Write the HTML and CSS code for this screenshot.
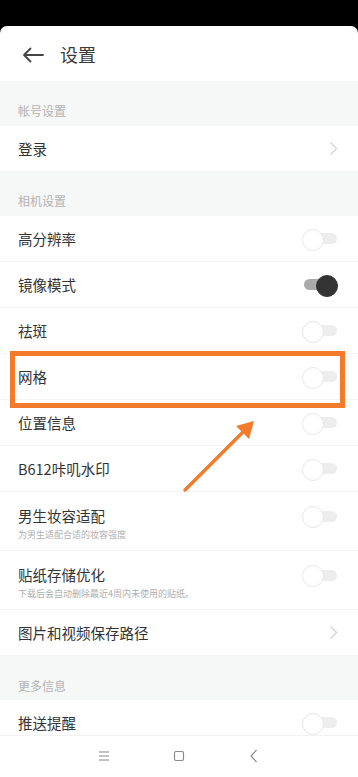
FILE: index.html
```html
<!DOCTYPE html>
<html lang="zh">
<head>
<meta charset="utf-8">
<title>设置</title>
<link rel="stylesheet" href="styles.css">
</head>
<body>
<div class="phone">
  <div class="statusbar"></div>
  <div class="app">
    <header class="topbar">
      <svg class="back" width="22" height="16" viewBox="0 0 22 16"><path d="M21 8H2M8.5 1.5L2 8l6.5 6.5" fill="none" stroke="#444" stroke-width="1.8" stroke-linecap="round" stroke-linejoin="round"/></svg>
      <h1 class="title">设置</h1>
    </header>
    <main class="list">
      <div class="section">帐号设置</div>
      <div class="row"><span class="label">登录</span><svg class="chev" width="9" height="15" viewBox="0 0 9 15"><path d="M1.5 1.5L7.5 7.5L1.5 13.5" fill="none" stroke="#d4d4d4" stroke-width="1.3"/></svg></div>
      <div class="section s2">相机设置</div>
      <div class="row"><span class="label">高分辨率</span><span class="toggle"></span></div>
      <div class="row"><span class="label">镜像模式</span><span class="toggle on"></span></div>
      <div class="row"><span class="label">祛斑</span><span class="toggle"></span></div>
      <div class="row"><span class="label">网格</span><span class="toggle"></span></div>
      <div class="row"><span class="label">位置信息</span><span class="toggle"></span></div>
      <div class="row"><span class="label">B612咔叽水印</span><span class="toggle"></span></div>
      <div class="row tall"><div class="texts"><span class="label">男生妆容适配</span><span class="sub">为男生适配合适的妆容强度</span></div><span class="toggle"></span></div>
      <div class="row tall"><div class="texts"><span class="label">贴纸存储优化</span><span class="sub">下载后会自动删除最近4周内未使用的贴纸。</span></div><span class="toggle"></span></div>
      <div class="row"><span class="label">图片和视频保存路径</span><svg class="chev" width="9" height="15" viewBox="0 0 9 15"><path d="M1.5 1.5L7.5 7.5L1.5 13.5" fill="none" stroke="#d4d4d4" stroke-width="1.3"/></svg></div>
      <div class="section s3">更多信息</div>
      <div class="row"><span class="label">推送提醒</span><span class="toggle"></span></div>
    </main>
    <nav class="navbar">
      <svg width="20" height="14" viewBox="0 0 20 14"><path d="M5 3h10M5 7h10M5 11h10" stroke="#8a8a8a" stroke-width="1.1"/></svg>
      <svg width="20" height="14" viewBox="0 0 20 14"><rect x="5.5" y="2.5" width="9" height="9" rx="1.5" fill="none" stroke="#8a8a8a" stroke-width="1.2"/></svg>
      <svg width="20" height="14" viewBox="0 0 20 14"><path d="M12.5 1L7 7l5.5 6" fill="none" stroke="#8a8a8a" stroke-width="1.2"/></svg>
    </nav>
  </div>
</div>
<div class="highlight"></div>
<svg class="arrow" width="358" height="777" viewBox="0 0 358 777"><line x1="185" y1="490" x2="243" y2="432" stroke="#f47a2c" stroke-width="3.5" stroke-linecap="round"/><polygon points="254,421 236,426 249,439" fill="#f47a2c"/></svg>
</body>
</html>
```
FILE: styles.css
```css
* { box-sizing: border-box; }
html, body { margin: 0; padding: 0; }
body {
  width: 358px;
  height: 777px;
  overflow: hidden;
  background: #000;
  font-family: "Noto Sans CJK SC", "Noto Sans", sans-serif;
  color: #333;
  position: relative;
}
.phone {
  height: 777px;
  display: flex;
  flex-direction: column;
}
.statusbar {
  height: 26px;
  background: #000;
  flex: none;
}
.app {
  flex: 1;
  background: #fff;
  border-radius: 7px 7px 0 0;
  display: flex;
  flex-direction: column;
  overflow: hidden;
}
.topbar {
  height: 55px;
  flex: none;
  display: flex;
  align-items: center;
  padding-left: 22px;
}
.back { margin-right: 16px; margin-top: 2px; }
.title {
  margin: 0;
  font-size: 18px;
  font-weight: 400;
  color: #3a3a3a;
  line-height: 20px;
}
.list {
  flex: 1;
  overflow: hidden;
}
.section {
  height: 45px;
  background: #f6f7f7;
  padding: 22px 0 0 18px;
  font-size: 12px;
  line-height: 16px;
  color: #b3b3b3;
}
.section.s2 { height: 44px; padding-top: 21px; }
.section.s3 { height: 44px; padding-top: 22px; }
.row {
  height: 46px;
  display: flex;
  align-items: center;
  justify-content: space-between;
  padding: 0 20px 0 18px;
  border-bottom: 1px solid #f3f3f3;
}
.label {
  font-size: 14.5px;
  line-height: 20px;
  color: #333;
}
.row.tall {
  height: 59px;
  align-items: flex-start;
  padding-top: 14px;
}
.texts { display: flex; flex-direction: column; }
.sub {
  font-size: 9px;
  line-height: 12px;
  margin-top: 3px;
  color: #b0b0b0;
  white-space: nowrap;
}
.row.tall .toggle { margin-top: 0; }
.chev { margin-right: 0; }
.toggle {
  position: relative;
  width: 36px;
  height: 20px;
  flex: none;
}
.toggle::before {
  content: "";
  position: absolute;
  left: 2px;
  right: 1px;
  top: 4.5px;
  height: 11px;
  border-radius: 6px;
  background: #ededed;
}
.toggle::after {
  content: "";
  position: absolute;
  left: 0;
  top: 0;
  width: 20px;
  height: 20px;
  border-radius: 50%;
  background: #fff;
  border: 1.5px solid #e8e8e8;
}
.toggle.on::before { background: #ababab; right: 4px; }
.toggle.on::after {
  left: auto;
  right: 0;
  background: #333;
  border-color: #333;
}
.navbar {
  height: 42px;
  flex: none;
  background: #fff;
  border-top: 1px solid #f2f2f2;
  display: flex;
  justify-content: center;
  align-items: center;
  gap: 55px;
  padding-bottom: 2px;
}
.highlight {
  position: absolute;
  left: 10px;
  top: 351px;
  width: 335px;
  height: 57px;
  border: 5px solid #f47a2c;
}
.arrow {
  position: absolute;
  left: 0;
  top: 0;
  pointer-events: none;
}
```
